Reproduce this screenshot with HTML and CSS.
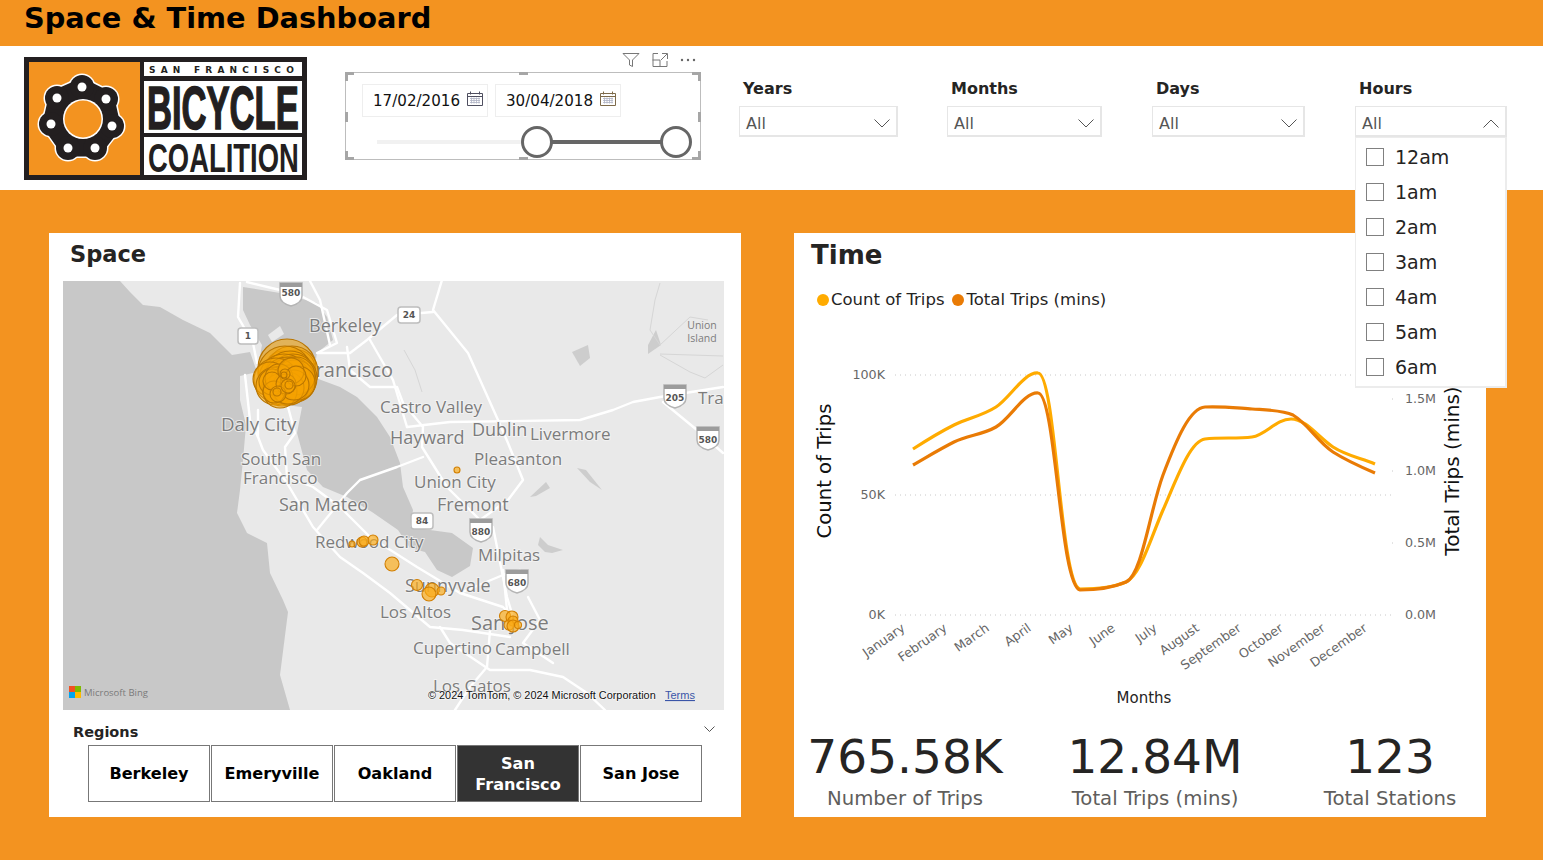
FILE: index.html
```html
<!DOCTYPE html>
<html lang="en">
<head>
<meta charset="utf-8">
<title>Space &amp; Time Dashboard</title>
<link rel="stylesheet" href="styles.css">
</head>
<body>
<div class="page">
  <header class="titlebar"><h1>Space &amp; Time Dashboard</h1></header>

  <section class="toolbar">
    <svg class="logo" viewBox="24 57 283 123" width="283" height="123" role="img" aria-label="San Francisco Bicycle Coalition">
      <rect class="logo-black" x="24" y="57" width="283" height="123"/>
      <rect class="logo-orange" x="29" y="62" width="111" height="113"/>
      <rect class="logo-white" x="144" y="62" width="158" height="14"/>
      <rect class="logo-white" x="144" y="81" width="158" height="52"/>
      <rect class="logo-white" x="144" y="137" width="158" height="38"/>
      <g class="chain-edge">
        <polygon points="82,87 106,99 112,126 95,148 68,148 51,124 57,98"/>
        <circle cx="82" cy="87" r="13.5"/><circle cx="106" cy="99" r="13.5"/><circle cx="112" cy="126" r="13.5"/><circle cx="95" cy="148" r="13.5"/>
        <circle cx="68" cy="148" r="13.5"/><circle cx="51" cy="124" r="13.5"/><circle cx="57" cy="98" r="13.5"/>
      </g>
      <g class="chain">
        <polygon points="82,87 106,99 112,126 95,148 68,148 51,124 57,98"/>
        <circle cx="82" cy="87" r="12"/><circle cx="106" cy="99" r="12"/><circle cx="112" cy="126" r="12"/><circle cx="95" cy="148" r="12"/>
        <circle cx="68" cy="148" r="12"/><circle cx="51" cy="124" r="12"/><circle cx="57" cy="98" r="12"/>
      </g>
      <circle class="chain-ring" cx="83" cy="119" r="20"/>
      <circle class="logo-orange" cx="83" cy="119" r="18.5"/>
      <circle class="logo-white" cx="82" cy="87" r="4.5"/><circle class="logo-white" cx="106" cy="99" r="4.5"/>
      <circle class="logo-white" cx="112" cy="126" r="4.5"/><circle class="logo-white" cx="95" cy="148" r="4.5"/>
      <circle class="logo-white" cx="68" cy="148" r="4.5"/><circle class="logo-white" cx="51" cy="124" r="4.5"/>
      <circle class="logo-white" cx="57" cy="98" r="4.5"/>
      <text class="logo-small" x="149" y="73">SAN FRANCISCO</text>
      <text class="logo-big" transform="translate(147 129) scale(.567 1)">BICYCLE</text>
      <text class="logo-mid" transform="translate(148 172) scale(.686 1)">COALITION</text>
    </svg>

    <div class="date-slicer">
      <div class="visual-tools">
        <svg width="18" height="14" viewBox="0 0 18 14"><path class="tool-line" d="M1 .5h16L10.5 7v6.5l-3-1.5V7z"/></svg>
        <svg width="16" height="14" viewBox="0 0 16 14"><path class="tool-line" d="M6 .5H1v13h14V8M.5 7H8v6.5M10 .5h5.5V6M15 1L9 7"/></svg>
        <svg width="16" height="14" viewBox="0 0 16 14"><circle class="tool-dot" cx="2" cy="7" r="1.2"/><circle class="tool-dot" cx="8" cy="7" r="1.2"/><circle class="tool-dot" cx="14" cy="7" r="1.2"/></svg>
      </div>
      <i class="handle h-tl"></i><i class="handle h-tr"></i><i class="handle h-bl"></i><i class="handle h-br"></i>
      <i class="mid m-t"></i><i class="mid m-b"></i><i class="mid m-l"></i><i class="mid m-r"></i>
      <div class="date-row">
        <div class="date-box"><span>17/02/2016</span>
          <svg width="16" height="15" viewBox="0 0 16 15"><path class="cal-line" d="M.5 2.5h15v12H.5zM.5 5.5h15M3.5 .5v3M12.5 .5v3"/><path class="cal-grid" d="M3 7.5h10M3 9.5h10M3 11.5h10M4.5 6.5v6M7 6.5v6M9.5 6.5v6M12 6.5v6"/></svg>
        </div>
        <div class="date-box"><span>30/04/2018</span>
          <svg width="16" height="15" viewBox="0 0 16 15"><path class="cal-line warm" d="M.5 2.5h15v12H.5zM.5 5.5h15M3.5 .5v3M12.5 .5v3"/><path class="cal-grid" d="M3 7.5h10M3 9.5h10M3 11.5h10M4.5 6.5v6M7 6.5v6M9.5 6.5v6M12 6.5v6"/></svg>
        </div>
      </div>
      <div class="slider">
        <div class="track"></div><div class="track-on"></div>
        <div class="knob knob-a"></div><div class="knob knob-b"></div>
      </div>
    </div>

    <div class="slicers">
      <div class="slicer s-years"><div class="slicer-label">Years</div>
        <div class="select"><span>All</span><svg class="chev" width="16" height="9" viewBox="0 0 16 9"><path d="M.5.5L8 8 15.5.5"/></svg></div></div>
      <div class="slicer s-months"><div class="slicer-label">Months</div>
        <div class="select"><span>All</span><svg class="chev" width="16" height="9" viewBox="0 0 16 9"><path d="M.5.5L8 8 15.5.5"/></svg></div></div>
      <div class="slicer s-days"><div class="slicer-label">Days</div>
        <div class="select"><span>All</span><svg class="chev" width="16" height="9" viewBox="0 0 16 9"><path d="M.5.5L8 8 15.5.5"/></svg></div></div>
      <div class="slicer s-hours"><div class="slicer-label">Hours</div>
        <div class="select"><span>All</span><svg class="chev" width="16" height="9" viewBox="0 0 16 9"><path d="M.5 8.5L8 1l7.5 7.5"/></svg></div>
        <ul class="hours-list">
          <li><i></i>12am</li><li><i></i>1am</li><li><i></i>2am</li><li><i></i>3am</li>
          <li><i></i>4am</li><li><i></i>5am</li><li><i></i>6am</li>
        </ul>
      </div>
    </div>
  </section>

  <main class="canvas">
    <section class="card">
      <h2 class="space-title">Space</h2>
      <svg class="map" viewBox="63 281 661 429" width="661" height="429">
        <rect class="land" x="63" y="281" width="661" height="429"/>
        <polygon class="water" points="63,281 120,281 130,292 143,305 160,307 183,320 210,333 232,355 250,352 257,372 240,376 240,400 246,425 243,460 240,490 237,513 247,533 267,543 270,573 283,600 288,612 280,675 290,710 63,710"/>
        <polygon class="water" points="243,287 280,293 317,303 327,317 333,340 317,353 313,377 340,387 357,397 377,417 390,437 400,463 403,487 413,510 410,527 430,530 452,533 473,548 470,566 452,577 437,570 425,552 410,548 398,530 372,512 347,497 323,487 307,470 297,433 302,407 285,405 262,392 257,372 262,345 250,325 243,310"/>
        <polygon class="land" points="268,335 280,326 284,334 272,342"/>
        <polygon class="pond" points="540,537 548,545 563,550 552,553 545,552 538,545"/>
        <polygon class="pond" points="572,352 588,345 590,358 580,366"/>
        <polygon class="pond" points="530,497 546,482 550,488 536,496"/>
        <polygon class="pond" points="577,468 586,470 602,490 590,482"/>
        <polygon class="pond" points="648,345 656,330 661,345 648,354"/>
        <polyline class="levee" points="660,283 655,300 650,330 660,345 690,317 708,320"/>
        <polyline class="levee" points="660,355 690,372 705,378 723,365"/>
        <polyline class="levee" points="660,354 723,356"/>
        <polyline class="levee" points="404,350 415,370 422,392"/>
        <g class="roads">
          <polyline points="442,280 433,310 468,353 498,420 508,443 523,480 508,500 480,520"/>
          <polyline points="407,427 450,422 580,420 613,410 633,402 660,397 723,387"/>
          <polyline points="663,402 697,430 723,453"/>
          <polyline points="350,353 367,340 397,315 433,312"/>
          <polyline points="347,347 350,370 370,387 397,387 403,403 423,427 422,447 447,487 480,520 493,527 507,597 513,617"/>
          <polyline points="423,457 397,467 360,480 347,493 317,530"/>
          <polyline points="288,407 295,433 285,447 287,477 313,487 340,507 370,537 417,567 460,593 503,607 520,625"/>
          <polyline points="258,410 258,437 263,450 287,483 313,527 340,557 363,573 390,593 430,627 463,630 510,637"/>
          <polyline points="490,630 487,667 470,687 455,710"/>
          <polyline points="440,627 450,643 490,670 530,670 563,677 587,693 605,710"/>
          <polyline points="503,570 507,610"/>
          <polyline points="528,597 540,620 523,643 553,663"/>
          <polyline points="240,283 238,317 253,343 257,363"/>
          <polyline points="247,282 280,290 303,297 327,310 337,343 317,353 350,353"/>
          <polyline points="370,340 393,380 407,427"/>
          <polyline points="245,375 250,420 258,437"/>
          <polyline points="310,281 320,300 330,345"/>
          <polyline points="460,593 503,575 520,570"/>
        </g>
        <text class="mlabel l18" x="309" y="332">Berkeley</text>
        <text class="mlabel l20 end" x="393" y="377">San Francisco</text>
        <text class="mlabel" x="380" y="413">Castro Valley</text>
        <text class="mlabel l18" x="390" y="444">Hayward</text>
        <text class="mlabel l18" x="472" y="436">Dublin</text>
        <text class="mlabel" x="530" y="440">Livermore</text>
        <text class="mlabel" x="474" y="465">Pleasanton</text>
        <text class="mlabel" x="414" y="488">Union City</text>
        <text class="mlabel l18" x="437" y="511">Fremont</text>
        <text class="mlabel l19" x="221" y="431">Daly City</text>
        <text class="mlabel" x="241" y="465">South San</text>
        <text class="mlabel" x="243" y="484">Francisco</text>
        <text class="mlabel l18" x="279" y="511">San Mateo</text>
        <text class="mlabel" x="315" y="548">Redwood City</text>
        <text class="mlabel" x="478" y="561">Milpitas</text>
        <text class="mlabel l18" x="405" y="592">Sunnyvale</text>
        <text class="mlabel" x="380" y="618">Los Altos</text>
        <text class="mlabel l20" x="471" y="630">San Jose</text>
        <text class="mlabel" x="413" y="654">Cupertino</text>
        <text class="mlabel" x="495" y="655">Campbell</text>
        <text class="mlabel" x="433" y="692">Los Gatos</text>
        <text class="mlabel" x="698" y="404">Tracy</text>
        <text class="msmall" x="702" y="329">Union</text>
        <text class="msmall" x="702" y="342">Island</text>

        <g class="shield-s">
          <rect x="238" y="328" width="20" height="16" rx="3"/><rect x="398" y="307" width="22" height="16" rx="3"/><rect x="411" y="513" width="22" height="16" rx="3"/>
        </g>
        <text class="shield-t" x="248" y="339">1</text><text class="shield-t" x="409" y="318">24</text><text class="shield-t" x="422" y="524">84</text>
        <g class="shield-i">
          <path d="M280 283h22v13q0 7-11 10q-11-3-11-10z"/><path d="M664 385h22v13q0 7-11 10q-11-3-11-10z"/>
          <path d="M697 427h22v13q0 7-11 10q-11-3-11-10z"/><path d="M470 519h22v13q0 7-11 10q-11-3-11-10z"/>
          <path d="M506 570h22v13q0 7-11 10q-11-3-11-10z"/>
        </g>
        <g class="shield-top">
          <path d="M280 283h22v4h-22z"/><path d="M664 385h22v4h-22z"/><path d="M697 427h22v4h-22z"/><path d="M470 519h22v4h-22z"/><path d="M506 570h22v4h-22z"/>
        </g>
        <text class="shield-t" x="291" y="296">580</text><text class="shield-t" x="675" y="401">205</text><text class="shield-t" x="708" y="443">580</text>
        <text class="shield-t" x="481" y="535">880</text><text class="shield-t" x="517" y="586">680</text>

        <g class="bubbles">
          <circle cx="287" cy="368" r="29"/><circle cx="297" cy="368" r="18"/><circle cx="301" cy="374" r="15"/><circle cx="283" cy="369" r="18"/>
          <circle cx="292" cy="372" r="26"/><circle cx="285" cy="373" r="27"/><circle cx="290" cy="376" r="25"/>
          <circle cx="293" cy="378" r="24"/><circle cx="284" cy="379" r="25"/><circle cx="291" cy="380" r="23"/><circle cx="287" cy="381" r="24"/>
          <circle cx="295" cy="381" r="21"/><circle cx="276" cy="380" r="22"/><circle cx="270" cy="379" r="17"/><circle cx="282" cy="386" r="20"/>
          <circle cx="275" cy="386" r="19"/><circle cx="289" cy="385" r="20"/><circle cx="296" cy="376" r="19"/><circle cx="298" cy="383" r="17"/><circle cx="280" cy="391" r="17"/>
          <circle cx="288" cy="388" r="16"/><circle cx="294" cy="385" r="15"/><circle cx="272" cy="382" r="13"/><circle cx="279" cy="378" r="14"/>
          <circle cx="291" cy="371" r="13"/><circle cx="274" cy="392" r="11"/><circle cx="272" cy="381" r="9"/><circle cx="286" cy="384" r="10"/>
          <circle cx="296" cy="376" r="10"/><circle cx="278" cy="394" r="8"/><circle cx="288" cy="386" r="7"/><circle cx="285" cy="374" r="5"/>
          <circle cx="277" cy="392" r="4"/><circle cx="289" cy="385" r="4"/><circle cx="284" cy="375" r="3"/>
        </g>
        <g class="bubbles light">
          <circle cx="457" cy="470" r="3"/>
          <circle cx="352" cy="544" r="3"/><circle cx="362" cy="542" r="5"/><circle cx="364" cy="541" r="5"/><circle cx="373" cy="540" r="5"/>
          <circle cx="392" cy="564" r="7"/>
          <circle cx="417" cy="585" r="5.5"/><circle cx="432" cy="590" r="7"/><circle cx="441" cy="591" r="4"/><circle cx="429" cy="594" r="7"/>
          <circle cx="505" cy="616" r="5.5"/><circle cx="512" cy="617" r="6"/><circle cx="513" cy="621" r="5"/><circle cx="509" cy="625" r="5"/><circle cx="513" cy="626" r="6"/><circle cx="518" cy="625" r="3.5"/>
        </g>
        <rect class="ms-r" x="69" y="686" width="6" height="6"/><rect class="ms-g" x="75" y="686" width="6" height="6"/>
        <rect class="ms-b" x="69" y="692" width="6" height="6"/><rect class="ms-y" x="75" y="692" width="6" height="6"/>
        <text class="bing" x="84" y="696">Microsoft Bing</text>
        <text class="copy" x="428" y="699">© 2024 TomTom, © 2024 Microsoft Corporation</text>
        <text class="terms" x="665" y="699">Terms</text>
      </svg>
      <div class="regions">
        <div class="regions-head"><span>Regions</span><svg class="chev" width="11" height="6" viewBox="0 0 11 6"><path d="M.5.5l5 5 5-5"/></svg></div>
        <div class="region-buttons">
          <button class="region">Berkeley</button>
          <button class="region">Emeryville</button>
          <button class="region">Oakland</button>
          <button class="region on">San Francisco</button>
          <button class="region">San Jose</button>
        </div>
      </div>
    </section>

    <section class="card">
      <h2 class="time-title">Time</h2>
      <div class="legend">
        <i class="dot dot-a"></i><span>Count of Trips</span>
        <i class="dot dot-b"></i><span>Total Trips (mins)</span>
      </div>
      <svg class="chart" viewBox="794 350 692 365" width="692" height="365">
        <path class="grid" d="M895 375H1392M895 495H1392M895 615H1392M1392 399h5M1392 471h5M1392 543h5"/>
        <text class="tick right" x="885" y="379">100K</text>
        <text class="tick right" x="885" y="499">50K</text>
        <text class="tick right" x="885" y="619">0K</text>
        <text class="tick right" x="1436" y="403">1.5M</text>
        <text class="tick right" x="1436" y="475">1.0M</text>
        <text class="tick right" x="1436" y="547">0.5M</text>
        <text class="tick right" x="1436" y="619">0.0M</text>
        <path class="line-a" d="M913 449C927 440 940 432 954 425C968 418 982 416 996 407C1010 398 1024 372 1038 373C1056 373 1060 585 1080 589C1095 589 1112 588 1126 582C1140 576 1150 540 1163 510C1177 478 1190 441 1205 439C1220 437 1237 439 1252 437C1266 435 1276 419 1291 419C1306 419 1318 437 1333 447C1347 456 1361 458 1375 464"/>
        <path class="line-b" d="M913 465C927 457 940 449 954 442C968 435 982 435 996 427C1010 419 1024 392 1038 393C1056 394 1060 586 1080 590C1095 590 1112 588 1126 582C1142 575 1150 510 1163 475C1177 438 1190 408 1205 407C1220 406 1237 408 1252 409C1266 410 1282 410 1293 415C1308 424 1318 442 1333 452C1347 461 1361 467 1375 473"/>
        <text class="month" transform="translate(906 630) rotate(-35)">January</text>
        <text class="month" transform="translate(948 630) rotate(-35)">February</text>
        <text class="month" transform="translate(990 630) rotate(-35)">March</text>
        <text class="month" transform="translate(1032 630) rotate(-35)">April</text>
        <text class="month" transform="translate(1074 630) rotate(-35)">May</text>
        <text class="month" transform="translate(1116 630) rotate(-35)">June</text>
        <text class="month" transform="translate(1158 630) rotate(-35)">July</text>
        <text class="month" transform="translate(1200 630) rotate(-35)">August</text>
        <text class="month" transform="translate(1242 630) rotate(-35)">September</text>
        <text class="month" transform="translate(1284 630) rotate(-35)">October</text>
        <text class="month" transform="translate(1326 630) rotate(-35)">November</text>
        <text class="month" transform="translate(1368 630) rotate(-35)">December</text>
        <text class="axis-title a1" transform="translate(831 471) rotate(-90)">Count of Trips</text>
        <text class="axis-title a2" transform="translate(1459 471) rotate(-90)">Total Trips (mins)</text>
        <text class="axis-x" x="1144" y="703">Months</text>
      </svg>
      <div class="kpis">
        <div class="kpi"><div class="kpi-value">765.58K</div><div class="kpi-label">Number of Trips</div></div>
        <div class="kpi"><div class="kpi-value">12.84M</div><div class="kpi-label">Total Trips (mins)</div></div>
        <div class="kpi"><div class="kpi-value">123</div><div class="kpi-label">Total Stations</div></div>
      </div>
    </section>
  </main>
</div>
</body>
</html>
```
FILE: styles.css
```css
* { box-sizing: border-box; }
html, body { margin: 0; padding: 0; }
body { font-family: "DejaVu Sans", Verdana, sans-serif; color: #252423; background: #f39320; }
.page { width: 1543px; height: 860px; overflow: hidden; display: flex; flex-direction: column; }

.titlebar { height: 46px; background: #f39320; padding-left: 24px; flex: none; }
.titlebar h1 { margin: 0; font-size: 28.8px; line-height: 37px; font-weight: 700; color: #000; }

.toolbar { height: 144px; background: #fff; flex: none; display: flex; align-items: flex-start; padding: 11px 0 0 24px; position: relative; z-index: 2; }
.logo { flex: none; }
.logo-black { fill: #231f20; }
.logo-orange { fill: #f39320; }
.logo-white { fill: #fff; }
.chain polygon { fill: #231f20; stroke: #231f20; stroke-width: 17; stroke-linejoin: round; }
.chain circle { fill: #231f20; }
.chain-edge polygon { fill: #fff; stroke: #fff; stroke-width: 20; stroke-linejoin: round; }
.chain-edge circle { fill: #fff; }
.chain-ring { fill: #fff; }
.logo-small { font: 700 9px "DejaVu Sans", sans-serif; letter-spacing: 5.2px; fill: #231f20; }
.logo-big { font: 700 61px "Liberation Sans", sans-serif; fill: #231f20; stroke: #231f20; stroke-width: 1.6px; }
.logo-mid { font: 700 40px "Liberation Sans", sans-serif; fill: #231f20; }

.date-slicer { width: 356px; height: 88px; margin: 15px 0 0 38px; border: 1px solid #bdbdbd; position: relative; flex: none; padding: 11px 0 0 16px; }
.visual-tools { position: absolute; right: 4px; top: -20px; display: flex; gap: 12px; align-items: center; }
.tool-line { fill: none; stroke: #777; stroke-width: 1; }
.tool-dot { fill: #666; }
.handle { position: absolute; width: 9px; height: 9px; border: 0 solid #a6a6a6; }
.h-tl { left: -1px; top: -1px; border-width: 3px 0 0 3px; }
.h-tr { right: -1px; top: -1px; border-width: 3px 3px 0 0; }
.h-bl { left: -1px; bottom: -1px; border-width: 0 0 3px 3px; }
.h-br { right: -1px; bottom: -1px; border-width: 0 3px 3px 0; }
.mid { position: absolute; background: #a6a6a6; }
.m-t, .m-b { width: 9px; height: 3px; left: 173px; }
.m-t { top: -1px; } .m-b { bottom: -1px; }
.m-l, .m-r { width: 3px; height: 10px; top: 39px; }
.m-l { left: -1px; } .m-r { right: -1px; }
.date-row { display: flex; gap: 7px; }
.date-box { width: 126px; height: 33px; border: 1px solid #eee; display: flex; align-items: flex-start; padding: 7px 0 0 10px; font-size: 15.1px; line-height: 18px; color: #111; gap: 7px; }
.date-box svg { flex: none; margin-top: -1px; }
.cal-line { fill: #fff; stroke: #4f4f60; }
.cal-line.warm { stroke: #7d6a4a; }
.cal-grid { fill: none; stroke: #aeb2c4; stroke-width: .8; }
.slider { position: relative; height: 30px; margin-top: 10px; }
.track { position: absolute; left: 15px; width: 160px; top: 13px; height: 4px; background: #f1f1f1; }
.track-on { position: absolute; left: 175px; width: 139px; top: 13px; height: 4px; background: #666; }
.knob { position: absolute; width: 32px; height: 32px; top: -1px; border: 3px solid #666; border-radius: 50%; background: #fff; }
.knob-a { left: 159px; } .knob-b { left: 298px; }

.slicers { display: flex; flex: none; margin: 21px 0 0 38px; }
.slicer { flex: none; position: relative; }
.s-years { width: 159px; margin-right: 49px; }
.s-months { width: 155px; margin-right: 50px; }
.s-days { width: 153px; margin-right: 50px; }
.s-hours { width: 152px; }
.slicer-label { font-size: 16px; font-weight: 700; line-height: 20px; padding-left: 4px; height: 27px; margin-top: 1px; color: #252423; }
.select { height: 31px; border: 1px solid #e6e6e6; border-width: 1px 2px 2px 1px; display: flex; justify-content: space-between; align-items: center; padding: 5px 6px 0 6px; font-size: 16px; color: #555; }
.chev { fill: none; }
.chev path { fill: none; stroke: #555; stroke-width: 1; }
.hours-list { position: absolute; left: 0; top: 59px; width: 152px; height: 251px; margin: 0; padding: 1px 0 0 10px; list-style: none; background: #fff; border: 1px solid #ececec; border-width: 1px 2px 2px 1px; }
.hours-list li { height: 35px; display: flex; align-items: center; font-size: 19px; color: #252423; gap: 11px; }
.hours-list i { width: 18px; height: 18px; border: 1.5px solid #808080; flex: none; }

.canvas { flex: 1; background: #f39320; display: flex; gap: 53px; padding: 43px 0 0 49px; }
.card { width: 692px; height: 584px; background: #fff; flex: none; display: flex; flex-direction: column; }
.space-title { margin: 0; height: 48px; padding-left: 21px; font-size: 22.5px; line-height: 42px; font-weight: 700; }
.time-title { margin: 0; height: 45px; padding-left: 17px; font-size: 26px; line-height: 44px; font-weight: 700; }
.map { display: block; margin-left: 14px; flex: none; }
.land { fill: #e9e9e9; }
.water { fill: #c8c8c8; }
.pond { fill: #cdcdcd; }
.levee { fill: none; stroke: #d6d6d6; stroke-width: 1; }
.roads polyline { fill: none; stroke: #fff; stroke-width: 2.4; stroke-linejoin: round; stroke-linecap: round; }
.mlabel { font: 17px "Open Sans", sans-serif; fill: #7c7c7c; stroke: rgba(245,245,245,.75); stroke-width: 2px; paint-order: stroke; }
.mlabel.l18 { font-size: 18px; }
.mlabel.l19 { font-size: 18.7px; }
.mlabel.l20 { font-size: 20px; }
.mlabel.end { text-anchor: end; }
.msmall { font: 10.5px "Open Sans", sans-serif; fill: #7c7c7c; text-anchor: middle; }
.shield-s rect { fill: #fff; stroke: #bdbdbd; stroke-width: 1.5; }
.shield-i path { fill: #fff; stroke: #b4b4b4; stroke-width: 1.5; }
.shield-top path { fill: #9c9c9c; }
.shield-t { font: 700 9px "DejaVu Sans", sans-serif; fill: #555; text-anchor: middle; }
.bubbles circle { fill: #f5a300; fill-opacity: .55; stroke: #b97500; stroke-width: 1.1; }
.bubbles.light circle { fill: #fbab18; fill-opacity: .68; stroke: #d27f00; }
.ms-r { fill: #f25022; } .ms-g { fill: #7fba00; } .ms-b { fill: #00a4ef; } .ms-y { fill: #ffb900; }
.bing { font: 9.5px "Open Sans", sans-serif; fill: #7a7a7a; }
.copy { font: 10.9px "Liberation Sans", sans-serif; fill: #111; stroke: rgba(255,255,255,.6); stroke-width: 1.5px; paint-order: stroke; }
.terms { font: 11px "Liberation Sans", sans-serif; fill: #3a55a8; text-decoration: underline; }

.regions { flex: 1; padding: 0 39px 0 24px; }
.regions-head { display: flex; justify-content: space-between; align-items: center; height: 35px; margin-right: -13px; font-size: 14.5px; font-weight: 700; }
.regions-head .chev { margin-top: 2px; }
.regions-head span { margin-top: 8px; }
.region-buttons { display: flex; gap: 1px; margin-left: 15px; }
.region { width: 122px; height: 57px; padding: 0 8px; background: #fff; border: 1.5px solid #777; font: 700 16.1px/21px "DejaVu Sans", sans-serif; color: #000; }
.region.on { background: #333; color: #fff; }

.legend { height: 72px; padding: 13px 0 0 23px; display: flex; align-items: flex-start; font-size: 16.5px; line-height: 18px; }
.dot { width: 12px; height: 12px; border-radius: 50%; margin: 3px 2px 0 0; flex: none; }
.dot-a { background: #ffab00; }
.dot-b { background: #e97b05; margin-left: 7px; margin-right: 3px; }
.chart { display: block; flex: none; }
.grid { fill: none; stroke: #c8c8c8; stroke-width: 1; stroke-dasharray: 1 4; }
.tick { font-size: 12.7px; fill: #666; }
.tick.right { text-anchor: end; }
.line-a { fill: none; stroke: #ffab00; stroke-width: 3.2; }
.line-b { fill: none; stroke: #e97b05; stroke-width: 3.2; }
.month { font-size: 12.7px; fill: #666; text-anchor: end; }
.axis-title { fill: #111; text-anchor: middle; }
.axis-title.a1 { font-size: 19.6px; }
.axis-title.a2 { font-size: 20px; }
.axis-x { font-size: 15px; fill: #252423; text-anchor: middle; }

.kpis { display: grid; grid-template-columns: 222px 278px 192px; flex: 1; }
.kpi { text-align: center; }
.kpi-value { font-size: 47px; line-height: 56px; margin-top: 14px; color: #252423; }
.kpi-label { font-size: 19.7px; line-height: 28px; color: #605e5c; }
```
